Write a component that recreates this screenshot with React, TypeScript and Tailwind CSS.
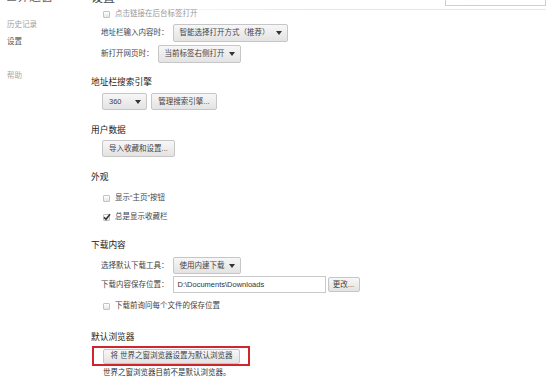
import type { ReactNode } from "react";

const font = "font-['Liberation_Sans','Noto_Sans_CJK_SC',sans-serif]";

const btn =
  "flex items-center border border-[#c6c6c6] rounded-[2px] bg-linear-to-b from-[#f7f7f7] to-[#e3e3e3] text-[#444] text-[7.5px] leading-none";

const Arrow = () => (
  <svg width="6" height="4" viewBox="0 0 6 4" className="shrink-0">
    <path d="M0 0h6L3 4z" fill="#333" />
  </svg>
);

const Select = ({ label, width }: { label: string; width: string }) => (
  <div className={`${btn} ${width} h-full justify-between pl-[6px] pr-[5px]`}>
    <span className="whitespace-nowrap">{label}</span>
    <Arrow />
  </div>
);

const Button = ({ label, width }: { label: string; width: string }) => (
  <div className={`${btn} ${width} h-full justify-center whitespace-nowrap`}>{label}</div>
);

const Checkbox = ({ checked = false }: { checked?: boolean }) => (
  <div className="relative w-[7px] h-[7px] shrink-0 border border-[#c2c2c2] rounded-[1px] bg-linear-to-b from-white to-[#e6e6e6]">
    {checked && (
      <svg
        width="8"
        height="8"
        viewBox="0 0 8 8"
        className="absolute -left-[1px] -top-[2px]"
      >
        <path d="M1 4.2 3 6.3 7 1.2" fill="none" stroke="#333" strokeWidth="1.5" />
      </svg>
    )}
  </div>
);

const CheckRow = ({
  label,
  checked,
  className = "",
}: {
  label: string;
  checked?: boolean;
  className?: string;
}) => (
  <div className={`flex items-center gap-[5px] pl-[12px] ${className}`}>
    <Checkbox checked={checked} />
    <span className="text-[7.5px] leading-none whitespace-nowrap">{label}</span>
  </div>
);

const Heading = ({ children, className = "" }: { children: ReactNode; className?: string }) => (
  <div className={`h-[14px] flex items-center text-[8.7px] leading-none text-[#222] ${className}`}>
    {children}
  </div>
);

const Row = ({ children, className = "" }: { children: ReactNode; className?: string }) => (
  <div className={`flex items-center gap-[4px] text-[7.5px] leading-none text-[#444] ${className}`}>
    {children}
  </div>
);

export default function App() {
  return (
    <div className={`${font} flex w-[552px] h-[384px] overflow-hidden bg-white text-[#444]`}>
      {/* left nav */}
      <nav className="w-[91px] shrink-0 flex flex-col pl-[7px] -mt-[9px]">
        <div className="h-[12px] -ml-[2px] flex items-center text-[12px] leading-none text-[#666] whitespace-nowrap">
          世界之窗
        </div>
        <div className="mt-[17px] h-[10px] flex items-center text-[7.5px] leading-none text-[#a0a0a0]">
          历史记录
        </div>
        <div className="mt-[7px] h-[10px] flex items-center text-[7.5px] leading-none text-[#555]">
          设置
        </div>
        <div className="mt-[24px] h-[10px] flex items-center text-[7.5px] leading-none text-[#a8a8a8]">
          帮助
        </div>
      </nav>

      {/* main */}
      <main className="flex-1 flex flex-col pr-[6px] -mt-[12px]">
        <header className="h-[21px] flex justify-between items-start">
          <div className="mt-[4px] text-[12px] leading-none text-[#444]">设置</div>
          <div className="w-[101px] h-[18px] border border-[#cfcfcf] flex items-center pl-[5px] text-[7.5px] text-[#aaa]">
            搜索设置
          </div>
        </header>
        <div className="h-[1px] bg-linear-to-r from-white via-[#e6e6e6] to-[#e6e6e6]" />

        <CheckRow label="点击链接在后台标签打开" className="h-[8px] text-[#999]" />

        <Row className="mt-[6px] h-[18px] pl-[10px]">
          <span>地址栏输入内容时：</span>
          <Select label="智能选择打开方式（推荐）" width="w-[115px]" />
        </Row>
        <Row className="mt-[3px] h-[18px] pl-[10px]">
          <span>新打开网页时：</span>
          <Select label="当前标签右侧打开" width="w-[83px]" />
        </Row>

        <Heading className="mt-[12px]">地址栏搜索引擎</Heading>
        <Row className="mt-[4px] h-[17px] pl-[11px]">
          <Select label="360" width="w-[45px]" />
          <Button label="管理搜索引擎..." width="w-[66px]" />
        </Row>

        <Heading className="mt-[13px]">用户数据</Heading>
        <Row className="mt-[3px] h-[17px] pl-[11px]">
          <Button label="导入收藏和设置..." width="w-[73px]" />
        </Row>

        <Heading className="mt-[13px]">外观</Heading>
        <CheckRow label="显示“主页”按钮" className="mt-[8px] h-[12px] text-[#444]" />
        <CheckRow label="总是显示收藏栏" checked className="mt-[7px] h-[12px] text-[#444]" />

        <Heading className="mt-[15px]">下载内容</Heading>
        <Row className="mt-[5px] h-[17px] pl-[10px]">
          <span>选择默认下载工具：</span>
          <Select label="使用内建下载" width="w-[68px]" />
        </Row>
        <Row className="mt-[2px] h-[17px] pl-[10px]">
          <span>下载内容保存位置：</span>
          <div className="w-[153px] h-full border border-[#c9c9c9] bg-white flex items-center pl-[4px] text-[#333] whitespace-nowrap">
            D:\Documents\Downloads
          </div>
          <div className="h-[15px] flex -ml-[2px]">
            <Button label="更改..." width="w-[32px]" />
          </div>
        </Row>
        <CheckRow label="下载前询问每个文件的保存位置" className="mt-[7px] h-[12px] text-[#444]" />

        <Heading className="mt-[18px]">默认浏览器</Heading>
        <div className="mt-[2px] ml-[1px] w-[158px] h-[20px] border-2 border-[#d0252d] flex items-center pl-[9px]">
          <div className="h-[15px] flex">
            <Button label="将 世界之窗浏览器设置为默认浏览器" width="w-[137px]" />
          </div>
        </div>
        <div className="mt-[1px] pl-[12px] h-[12px] flex items-center text-[7.5px] leading-none text-[#333]">
          世界之窗浏览器目前不是默认浏览器。
        </div>
      </main>
    </div>
  );
}
